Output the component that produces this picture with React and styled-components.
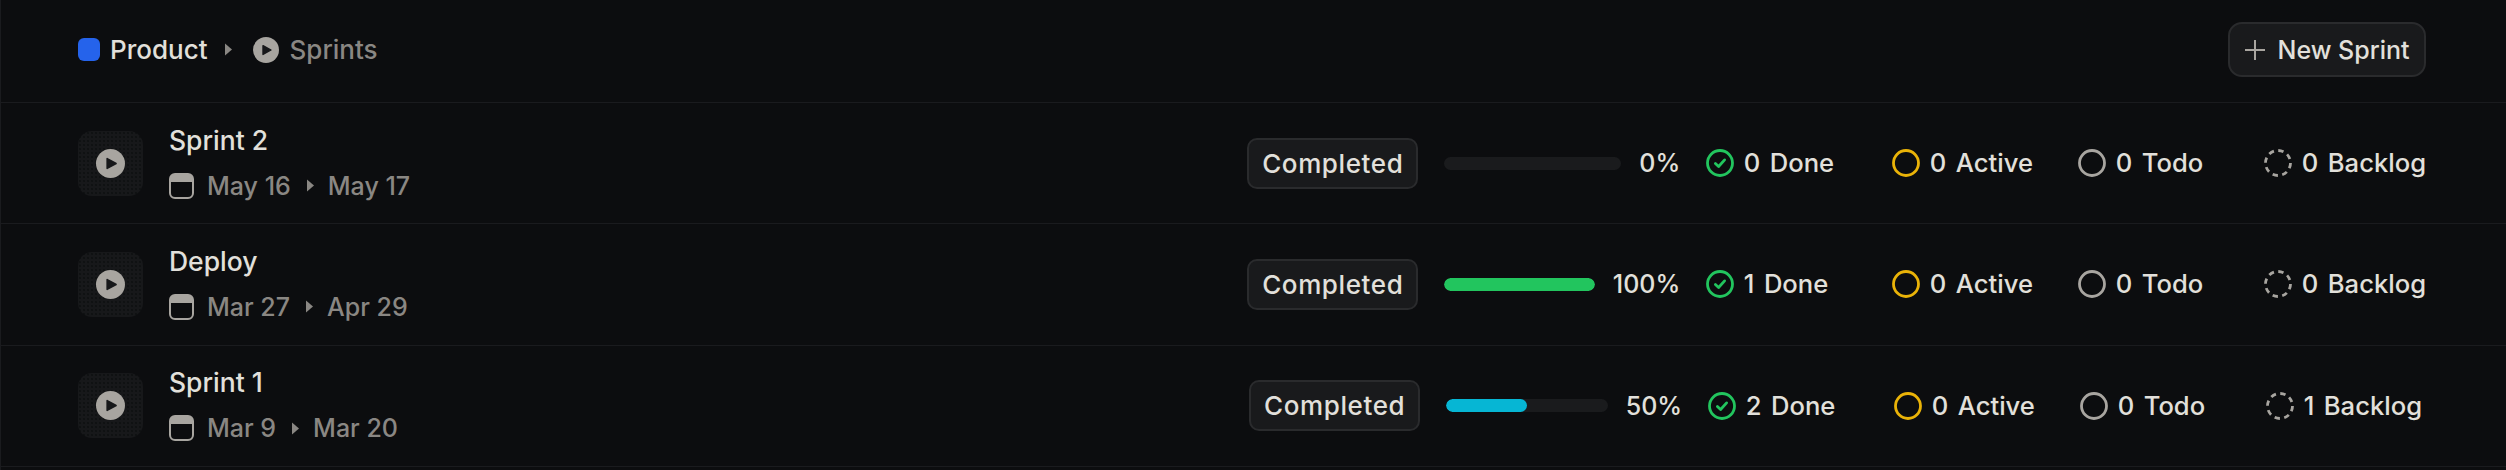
import React from 'react';
import styled, { createGlobalStyle } from 'styled-components';

const colors = {
    bg: '#0c0d0f',
    line: '#1a1b1e',
    text: '#e2e0db',
    muted: '#8a8783',
    icon: '#a8a5a0',
    surface: '#191a1c',
    border: '#2a2b2d',
    green: '#22c55e',
    cyan: '#06b6d4',
    yellow: '#eab308',
};

const GlobalStyle = createGlobalStyle`
  html, body {
    margin: 0;
    padding: 0;
    background: ${colors.bg};
  }
  body {
    font-family: Inter, "Liberation Sans", sans-serif;
    font-size: 25px;
    font-weight: 500;
    color: ${colors.text};
  }
`;

const Page = styled.div`
  width: 2506px;
  height: 470px;
  overflow: hidden;
  box-sizing: border-box;
  border-left: 1px solid ${colors.line};
  background: ${colors.bg};
`;

const Header = styled.header`
  height: 103px;
  box-sizing: border-box;
  padding: 0 80px 3px 77px;
  display: flex;
  align-items: center;
  justify-content: space-between;
  border-bottom: 1px solid ${colors.line};
`;

const Breadcrumb = styled.div`
  display: flex;
  align-items: center;
`;

const Logo = styled.span`
  width: 22px;
  height: 23px;
  border-radius: 6px;
  background: #2563eb;
  margin-right: 10px;
`;

const Crumb = styled.span`
  font-size: 26px;
  color: ${({ $muted }) => ($muted ? colors.muted : colors.text)};
`;

const CrumbArrow = styled.svg`
  width: 7px;
  height: 13px;
  margin: 0 21px 0 17px;
  fill: ${colors.muted};
`;

const CrumbPlay = styled.svg`
  width: 26px;
  height: 26px;
  margin-right: 11px;
`;

const NewButton = styled.button`
  width: 198px;
  height: 55px;
  display: flex;
  align-items: center;
  justify-content: center;
  gap: 11px;
  padding: 0;
  border: 2px solid ${colors.border};
  border-radius: 14px;
  background: ${colors.surface};
  color: ${colors.text};
  font: inherit;
`;

const PlusIcon = styled.svg`
  width: 22px;
  height: 22px;
  stroke: ${colors.icon};
  stroke-width: 2;
  fill: none;
`;

const Row = styled.div`
  height: 121.33px;
  box-sizing: border-box;
  padding: 0 ${({ $right }) => $right}px 0 77px;
  display: flex;
  align-items: center;
  justify-content: space-between;
  border-bottom: 1px solid ${colors.line};
`;

const Info = styled.div`
  display: flex;
  align-items: center;
  gap: 26px;
`;

const IconBox = styled.div`
  width: 65px;
  height: 65px;
  border-radius: 14px;
  display: flex;
  align-items: center;
  justify-content: center;
  background-color: #17181a;
  background-image: radial-gradient(#0c0d0f 0.6px, transparent 0.9px);
  background-size: 4px 4px;
`;

const PlayIcon = styled.svg`
  width: 29px;
  height: 29px;
`;

const Texts = styled.div`
  display: flex;
  flex-direction: column;
  gap: 16px;
  padding-bottom: 1px;
`;

const Title = styled.div`
  font-size: 26.5px;
  line-height: 30px;
`;

const Dates = styled.div`
  display: flex;
  align-items: center;
  color: ${colors.muted};
  line-height: 30px;
`;

const CalendarIcon = styled.svg`
  width: 25px;
  height: 26px;
  margin-right: 13px;
`;

const DateArrow = styled.svg`
  width: 7px;
  height: 13px;
  margin: 0 14px 0 16px;
  fill: ${colors.muted};
`;

const Meta = styled.div`
  display: flex;
  align-items: center;
`;

const Badge = styled.span`
  width: 171px;
  height: 51px;
  box-sizing: border-box;
  display: flex;
  align-items: center;
  justify-content: center;
  border: 2px solid ${colors.border};
  border-radius: 10px;
  background: ${colors.surface};
  margin-right: 26px;
  font-size: 26px;
  letter-spacing: 0.6px;
`;

const Progress = styled.div`
  width: 236px;
  display: flex;
  align-items: center;
  gap: 18px;
  margin-right: 26px;
`;

const Track = styled.div`
  flex: 1;
  height: 13px;
  border-radius: 7px;
  overflow: hidden;
  background: #1a1b1d;
`;

const Fill = styled.div`
  height: 100%;
  border-radius: 7px;
  background: ${({ $color }) => $color};
`;

const Stats = styled.div`
  display: flex;
  gap: 24px;
  font-size: 25.6px;
  line-height: 30px;
`;

const Stat = styled.div`
  min-width: ${({ $fixed }) => ($fixed ? '162px' : '0')};
  display: flex;
  align-items: center;
  gap: 9.5px;
`;

const StatIcon = styled.svg`
  width: 28px;
  height: 28px;
  fill: none;
`;

const Play = ({ as: Icon }) => (
    <Icon viewBox="0 0 26 26">
        <circle cx="13" cy="13" r="13" fill={colors.icon} />
        <path d="M10 8.6 L18 13 L10 17.4 Z" fill="#17181a" stroke="#17181a" strokeWidth="1.4" strokeLinejoin="round" />
    </Icon>
);

const Calendar = () => (
    <CalendarIcon viewBox="0 0 25 26">
        <rect x="1" y="1" width="23" height="24" rx="5" fill="none" stroke={colors.icon} strokeWidth="2" />
        <path d="M1 9 V6 a5 5 0 0 1 5 -5 H19 a5 5 0 0 1 5 5 V9 Z" fill={colors.icon} />
    </CalendarIcon>
);

const Arrow = ({ as: Icon }) => (
    <Icon viewBox="0 0 7 13">
        <path d="M0 0.5 L7 6.5 L0 12.5 Z" />
    </Icon>
);

const statIcons = {
    Done: (
        <>
            <circle cx="14" cy="14" r="12.5" stroke={colors.green} strokeWidth="2.8" />
            <path d="M9.4 14.4 L12.6 17.5 L18.6 10.9" stroke={colors.green} strokeWidth="2.8" strokeLinecap="round" strokeLinejoin="round" />
        </>
    ),
    Active: <circle cx="14" cy="14" r="12.5" stroke={colors.yellow} strokeWidth="2.8" />,
    Todo: <circle cx="14" cy="14" r="12.5" stroke={colors.icon} strokeWidth="2.8" />,
    Backlog: <circle cx="14" cy="14" r="12.5" stroke={colors.icon} strokeWidth="2.8" strokeDasharray="5.4 4.4" />,
};

const sprints = [
    { name: 'Sprint 2', start: 'May 16', end: 'May 17', pct: 0, color: colors.green, done: 0, backlog: 0, right: 80 },
    { name: 'Deploy', start: 'Mar 27', end: 'Apr 29', pct: 100, color: colors.green, done: 1, backlog: 0, right: 80 },
    { name: 'Sprint 1', start: 'Mar 9', end: 'Mar 20', pct: 50, color: colors.cyan, done: 2, backlog: 1, right: 84 },
];

const SprintRow = ({ sprint }) => {
    const stats = [
        ['Done', sprint.done],
        ['Active', 0],
        ['Todo', 0],
        ['Backlog', sprint.backlog],
    ];
    return (
        <Row $right={sprint.right}>
            <Info>
                <IconBox>
                    <Play as={PlayIcon} />
                </IconBox>
                <Texts>
                    <Title>{sprint.name}</Title>
                    <Dates>
                        <Calendar />
                        {sprint.start}
                        <Arrow as={DateArrow} />
                        {sprint.end}
                    </Dates>
                </Texts>
            </Info>
            <Meta>
                <Badge>Completed</Badge>
                <Progress>
                    <Track>
                        <Fill $color={sprint.color} style={{ width: `${sprint.pct}%` }} />
                    </Track>
                    <span>{sprint.pct}%</span>
                </Progress>
                <Stats>
                    {stats.map(([label, count]) => (
                        <Stat key={label} $fixed={label !== 'Backlog'}>
                            <StatIcon viewBox="0 0 28 28">{statIcons[label]}</StatIcon>
                            <span>{count}</span>
                            <span>{label}</span>
                        </Stat>
                    ))}
                </Stats>
            </Meta>
        </Row>
    );
};

export default function App() {
    return (
        <Page>
            <GlobalStyle />
            <Header>
                <Breadcrumb>
                    <Logo />
                    <Crumb>Product</Crumb>
                    <Arrow as={CrumbArrow} />
                    <Play as={CrumbPlay} />
                    <Crumb $muted>Sprints</Crumb>
                </Breadcrumb>
                <NewButton>
                    <PlusIcon viewBox="0 0 22 22">
                        <path d="M11 1 V21 M1 11 H21" />
                    </PlusIcon>
                    New Sprint
                </NewButton>
            </Header>
            {sprints.map(sprint => (
                <SprintRow key={sprint.name} sprint={sprint} />
            ))}
        </Page>
    );
}
